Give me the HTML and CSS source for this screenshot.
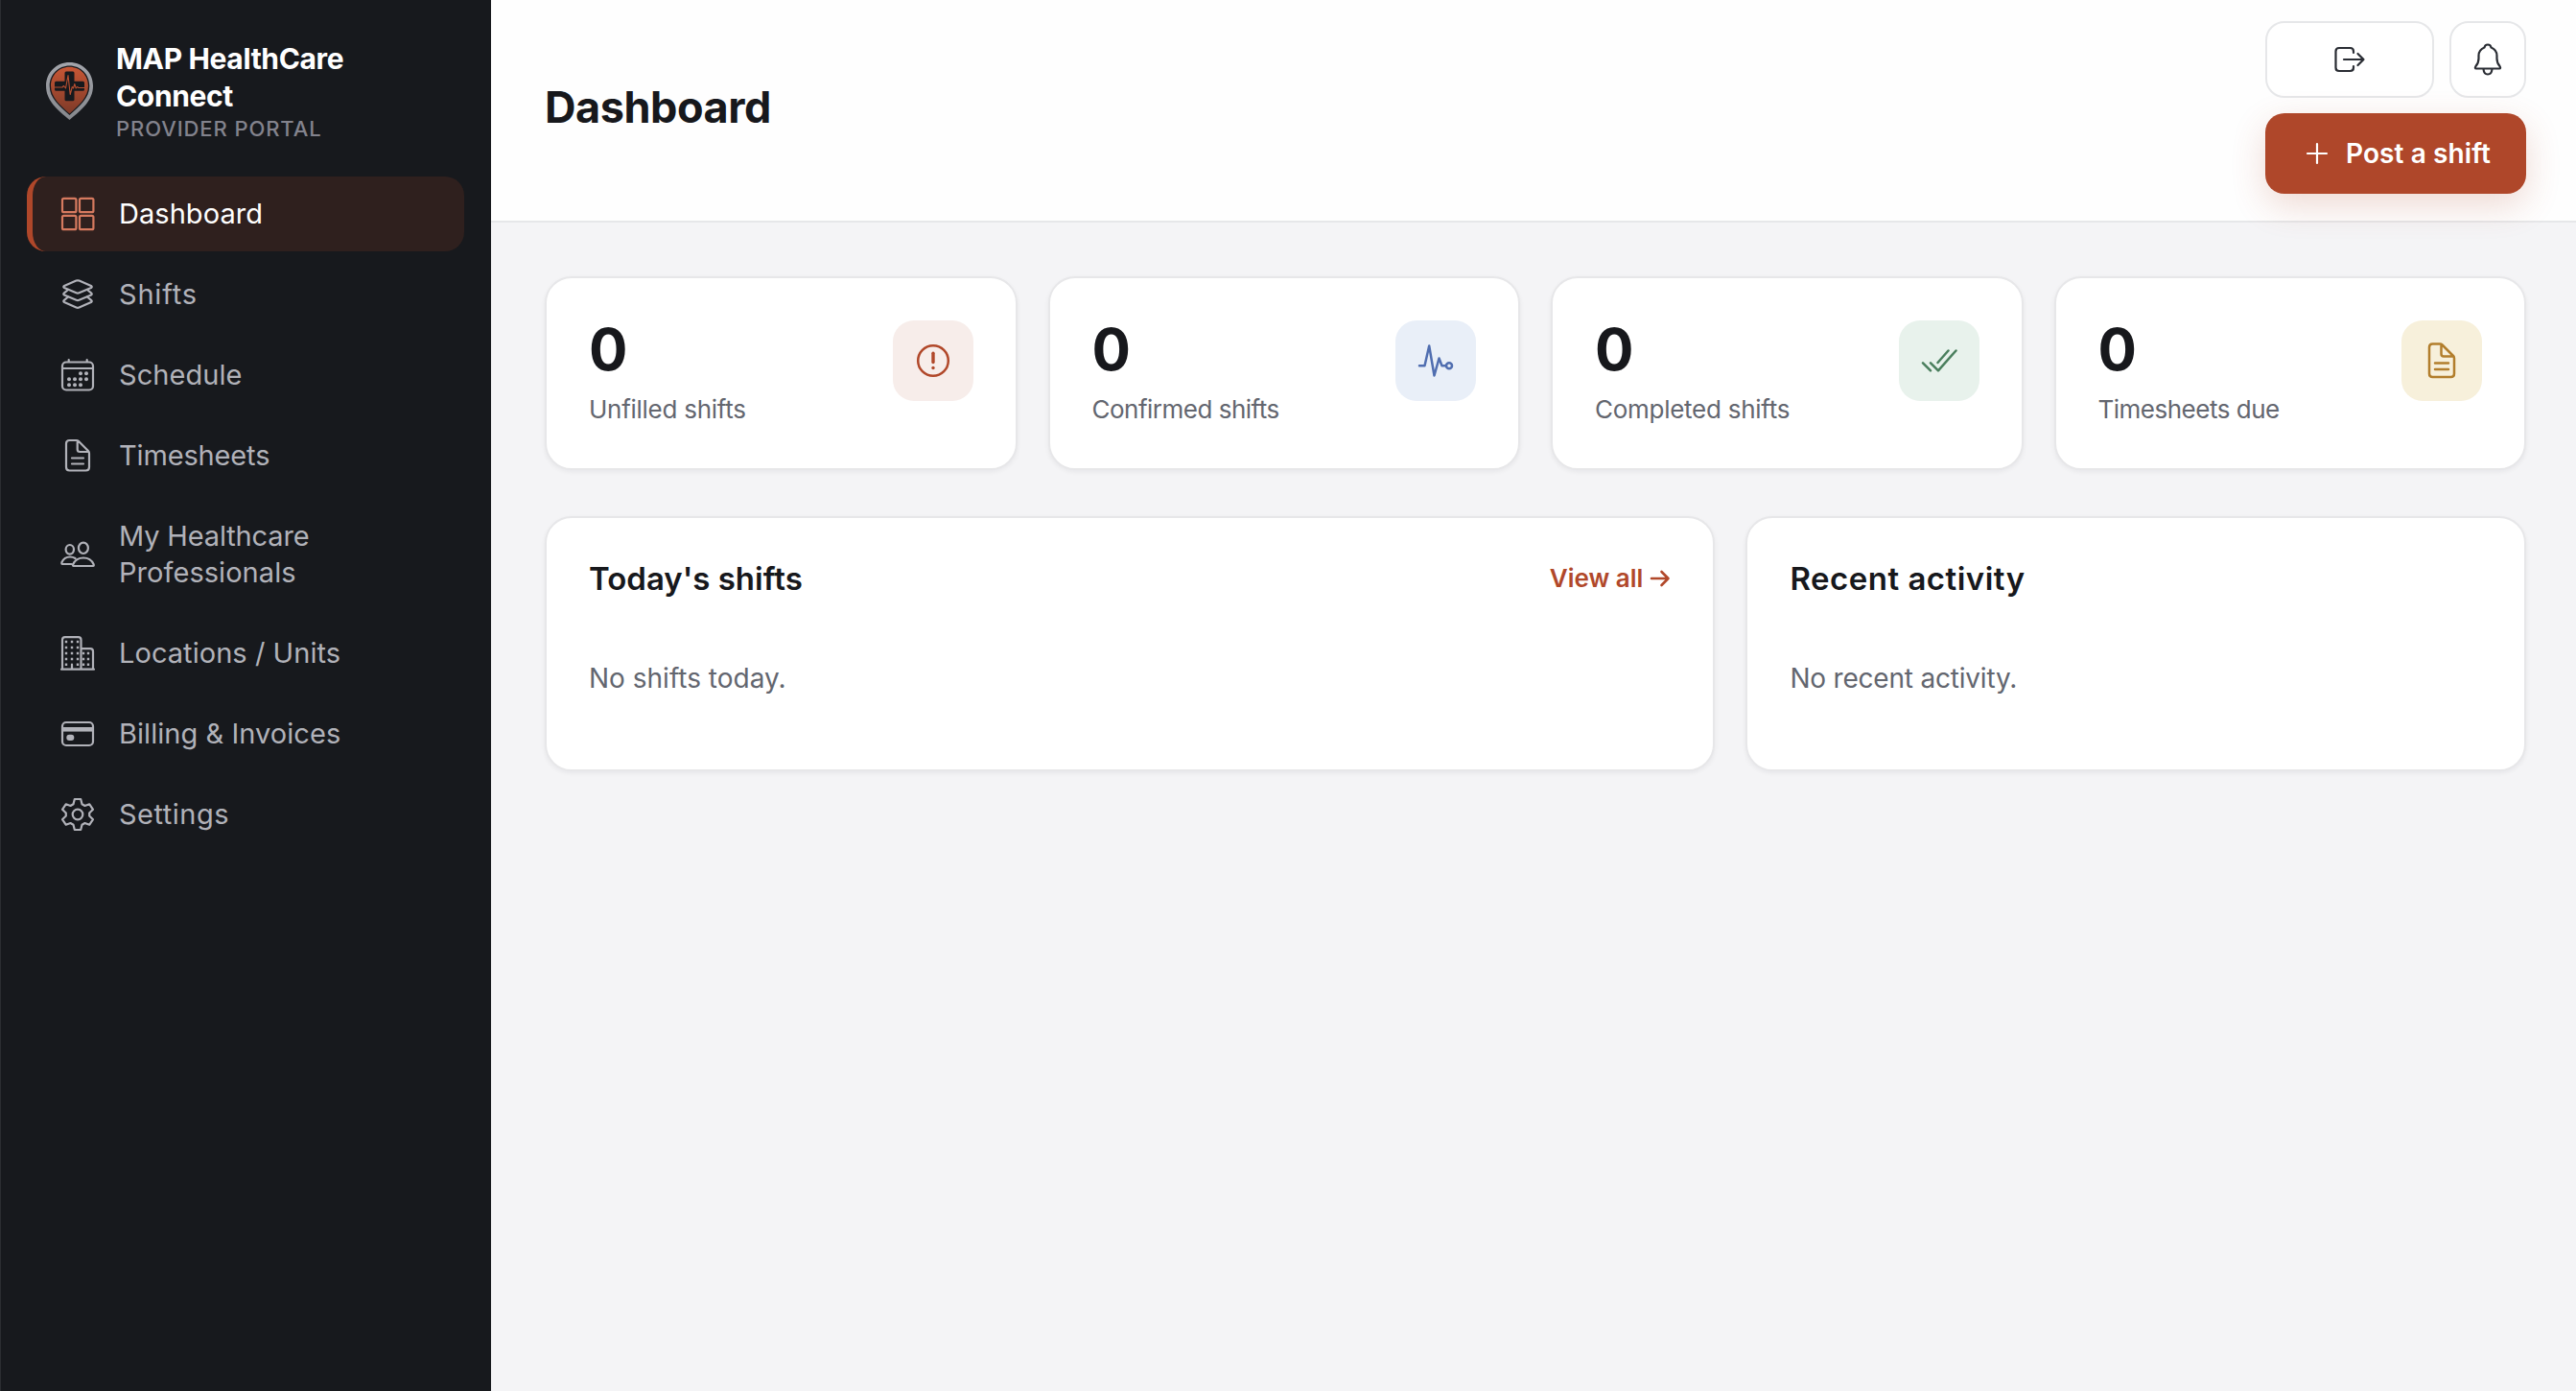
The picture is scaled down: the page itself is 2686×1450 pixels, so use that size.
FILE: index.html
```html
<!DOCTYPE html>
<html lang="en">
<head>
<meta charset="utf-8">
<title>Dashboard</title>
<link rel="stylesheet" href="styles.css">
</head>
<body>
<aside class="sidebar">
  <div class="brand">
    <svg class="brand-logo" viewBox="48 65 50 60">
      <defs>
        <linearGradient id="pin" x1="0" y1="0" x2="0" y2="1"><stop offset="0" stop-color="#c75635"/><stop offset="1" stop-color="#7d3a28"/></linearGradient>
        <linearGradient id="rim" x1="0" y1="0" x2="0" y2="1"><stop offset="0" stop-color="#a3a5ac"/><stop offset="1" stop-color="#85878c"/></linearGradient>
      </defs>
      <path fill="url(#rim)" d="M72.500 65C86 65 97 75.500 97 89.500C97 105 85 114.500 72.500 125C60 114.500 48 105 48 89.500C48 75.500 59 65 72.500 65Z"/>
      <path fill="#17191d" d="M72.500 68.500C84 68.500 93.300 77.500 93.300 89.500C93.300 102.500 83 110.500 72.500 120C62 110.500 51.700 102.500 51.700 89.500C51.700 77.500 61 68.500 72.500 68.500Z"/>
      <path fill="url(#pin)" d="M72.500 69.800C83.500 69.800 92 78.500 92 89.500C92 101.500 82.500 109.500 72.500 118.500C62.500 109.500 53 101.500 53 89.500C53 78.500 61.500 69.800 72.500 69.800Z"/>
      <path fill="#17191d" d="M69 74.500h7a1.500 1.500 0 0 1 1.500 1.500v8.800h9a1.500 1.500 0 0 1 1.500 1.500v7a1.500 1.500 0 0 1-1.500 1.500h-9v9a1.500 1.500 0 0 1-1.500 1.500h-7a1.500 1.500 0 0 1-1.500-1.500v-9h-9a1.500 1.500 0 0 1-1.500-1.500v-7a1.500 1.500 0 0 1 1.500-1.500h9V76a1.500 1.500 0 0 1 1.500-1.500Z"/>
      <path fill="none" stroke="#b84f31" stroke-width="1.100" stroke-linejoin="round" d="M57 91h8l1.500-1.500L68.500 92l2.500-13.500L73.200 98.500l2.100-8 1.200 1.500 1.300-4.500 1.400 4.500 1.300-1.500 1.500 1H88"/>
    </svg>
    <div class="brand-text">
      <div class="brand-name">MAP HealthCare<br>Connect</div>
      <div class="brand-sub">PROVIDER PORTAL</div>
    </div>
  </div>
  <nav class="nav">
    <a class="nav-item active">
      <svg viewBox="61 203 40 40"><rect x="65" y="206.800" width="14.400" height="14.400" rx="1.500"/><rect x="83" y="206.800" width="14.400" height="14.400" rx="1.500"/><rect x="65" y="224.800" width="14.400" height="14.400" rx="1.500"/><rect x="83" y="224.800" width="14.400" height="14.400" rx="1.500"/></svg>
      <span>Dashboard</span></a>
    <a class="nav-item">
      <svg viewBox="61 287 40 40"><path d="M79.500 292.600 67 298Q65.500 299 67 300L79.500 305.300Q81 306 82.500 305.300L95 300Q96.500 299 95 298L82.500 292.600Q81 292 79.500 292.600Z"/><path d="M71 302 67 305.300Q65.500 306.500 67 307.500L79.500 312.800Q81 313.400 82.500 312.800L95 307.500Q96.500 306.500 95 305.300L91 302"/><path d="M71 309.500 67 312.800Q65.500 314 67 315L79.500 320.500Q81 321.200 82.500 320.500L95 315Q96.500 314 95 312.800L91 309.500"/></svg>
      <span class="loose-2">Shifts</span></a>
    <a class="nav-item">
      <svg viewBox="61 371 40 40"><rect x="65" y="377.500" width="32" height="29" rx="4"/><path d="M65 384H97M71.700 375v2M90.700 375v2"/><g class="solid"><circle cx="84" cy="389.300" r="2"/><circle cx="90" cy="389.300" r="2"/><circle cx="72" cy="395.300" r="2"/><circle cx="78" cy="395.300" r="2"/><circle cx="84" cy="395.300" r="2"/><circle cx="90" cy="395.300" r="2"/><circle cx="72" cy="401.300" r="2"/><circle cx="78" cy="401.300" r="2"/><circle cx="84" cy="401.300" r="2"/></g></svg>
      <span>Schedule</span></a>
    <a class="nav-item">
      <svg viewBox="61 455 40 40"><path d="M72.500 459H79.500Q81 459 82 460L92 470Q93 471 93 472.500V487Q93 490.500 89.500 490.500H72.500Q69 490.500 69 487V462.500Q69 459 72.500 459ZM80.700 459.500V468.500Q80.700 471 83.200 471H92.500M75 477.500H87M75 483.500H87"/></svg>
      <span class="snug">Timesheets</span></a>
    <a class="nav-item">
      <svg viewBox="61 558 40 40"><ellipse cx="86.900" cy="571.300" rx="5" ry="5.700"/><ellipse cx="72.800" cy="572.800" rx="4.200" ry="4.800"/><path d="M76.500 590Q75.500 590 76.300 588Q79.500 581.500 87 581.500Q94.500 581.500 97.500 588Q98.300 590 97 590ZM74.500 588H65Q64 588 64.500 586Q67 580.500 73 580.500Q76 580.500 78.500 582"/></svg>
      <span><span class="snug">My Healthcare</span><br>Professionals</span></a>
    <a class="nav-item">
      <svg viewBox="61 661 40 40"><path d="M65 697.700V667Q65 664.200 67.800 664.200H81.700Q84.500 664.200 84.500 667V697.700M84.500 676.200H94.200Q97 676.200 97 679V697.700M64 697.700H98M75 692.500V697.500"/><path class="dots" d="M69 669h.01M75 669h.01M81 669h.01M69 675h.01M75 675h.01M81 675h.01M69 681h.01M75 681h.01M81 681h.01M69 687h.01M75 687h.01M81 687h.01M69 692.800h.01M81 692.800h.01M87 681h.01M92 681h.01M87 687h.01M92 687h.01M87 692.800h.01M92 692.800h.01"/></svg>
      <span>Locations / Units</span></a>
    <a class="nav-item">
      <svg viewBox="61 745 40 40"><rect x="65" y="753" width="32" height="24" rx="4"/><path class="solid" d="M65 758H97V762.600H65Z"/><rect class="solid" x="69.300" y="765.800" width="8" height="6.200" rx="3"/></svg>
      <span>Billing &amp; Invoices</span></a>
    <a class="nav-item">
      <svg viewBox="61 829 40 40"><circle cx="81" cy="849" r="5.300"/><path d="M77.800 833H84.200L85.500 838.200 88.500 840 93.300 838.300 97 843.800 93.200 847.500V850.500L97 854.200 93.300 859.700 88.500 858 85.500 859.800 84.200 865H77.800L76.500 859.800 73.500 858 68.700 859.700 65 854.200 68.800 850.500V847.500L65 843.800 68.700 838.300 73.500 840 76.500 838.200Z"/></svg>
      <span class="loose">Settings</span></a>
  </nav>
</aside>
<div class="main">
  <header class="topbar">
    <h1>Dashboard</h1>
    <div class="actions">
      <div class="action-row">
        <button class="btn logout" aria-label="Log out"><svg viewBox="2430 42 40 40"><path d="M2454 55V53.500Q2454 50 2450.500 50H2439Q2435.500 50 2435.500 53.500V70.500Q2435.500 74 2439 74H2450.500Q2454 74 2454 70.500V69M2444 62H2464.500M2458.500 56 2464.500 62 2458.500 68"/></svg></button>
        <button class="btn bell" aria-label="Notifications"><svg viewBox="2574 42 40 40"><path d="M2582 71.500H2606Q2608 71.500 2606.500 69Q2603.500 65.500 2603.500 61V58Q2603.500 52 2597.500 49.500Q2597 46.500 2594 46.500Q2591 46.500 2590.500 49.500Q2584.500 52 2584.500 58V61Q2584.500 65.500 2581.500 69Q2580 71.500 2582 71.500ZM2589.500 72Q2590 77.500 2594 77.500Q2598 77.500 2598.500 72"/></svg></button>
      </div>
      <button class="btn primary"><svg viewBox="2404 148 24 24"><path d="M2406 160H2426M2416 150V170"/></svg><span>Post a shift</span></button>
    </div>
  </header>
  <main class="content">
    <section class="stats">
      <div class="card stat"><div><div class="num">0</div><div class="label">Unfilled shifts</div></div>
        <div class="tile red"><svg viewBox="-20 -20 40 40"><circle r="15.800"/><path class="bang" d="M0-7.800V1.500"/><circle class="solid" cy="7.500" r="1.700"/></svg></div></div>
      <div class="card stat"><div><div class="num">0</div><div class="label tight">Confirmed shifts</div></div>
        <div class="tile blue"><svg viewBox="-20 -20 40 40"><path d="M-17 5.300H-11.500L-6.800-15.500-1.500 15.500 3.500-2.500 6.500 5.300H10.500"/><circle cx="14" cy="5.300" r="3"/></svg></div></div>
      <div class="card stat"><div><div class="num">0</div><div class="label">Completed shifts</div></div>
        <div class="tile green"><svg viewBox="-20 -20 40 40"><path d="M-17 2.300-9 10.300M-9 2.300-1 10.300 17.500-10.500M-1.500 2 9.500-10.500"/></svg></div></div>
      <div class="card stat"><div><div class="num">0</div><div class="label tight">Timesheets due</div></div>
        <div class="tile gold"><svg viewBox="-20 -20 40 40"><path d="M-9.500-17.500H-2Q-.5-17.500.5-16.500L12-5Q13-4 13-2.500V13.500Q13 17 9.500 17H-9.500Q-13 17-13 13.500V-14Q-13-17.500-9.500-17.500ZM-.5-17V-7Q-.5-4.500 2-4.500H12.500M-7 2.500H7M-7 9H7"/></svg></div></div>
    </section>
    <section class="panels">
      <div class="card panel"><div class="panel-head"><h2>Today's shifts</h2><a class="view-all"><span>View all</span><svg viewBox="1720 593 22 22"><path d="M1722 604H1739.500M1732.500 597 1739.500 604 1732.500 611"/></svg></a></div><p>No shifts today.</p></div>
      <div class="card panel"><div class="panel-head"><h2 class="loose">Recent activity</h2></div><p class="tight">No recent activity.</p></div>
    </section>
  </main>
</div>
</body>
</html>
```
FILE: styles.css
```css
* { box-sizing: border-box; }
body {
  margin: 0;
  height: 1450px;
  display: flex;
  background: #f4f4f6;
  color: #17181c;
  font-family: Inter, "Liberation Sans", sans-serif;
  overflow: hidden;
}
svg {
  display: block;
  flex: none;
  width: 40px;
  height: 40px;
  fill: none;
  stroke: currentColor;
  stroke-width: 2.2;
  stroke-linecap: round;
  stroke-linejoin: round;
}
.solid { fill: currentColor; stroke: none; }
.dots { stroke-width: 2.4; stroke-linecap: square; }

.sidebar {
  width: 512px;
  flex: none;
  padding: 42px 28px 0 27px;
  background: #17191d;
  border-left: 1px solid #2b2d31;
}
.brand { display: flex; align-items: center; gap: 23px; padding-left: 20px; height: 106px; }
.brand-logo { width: 50px; height: 60px; stroke: none; }
.brand-name { font-size: 30px; line-height: 39px; font-weight: 700; letter-spacing: -0.35px; color: #fff; }
.brand-sub { font-size: 22px; line-height: 28px; font-weight: 500; color: #83838d; letter-spacing: 0.9px; }

.nav { display: flex; flex-direction: column; gap: 6px; margin-top: 36px; }
.nav-item {
  display: flex;
  align-items: center;
  gap: 23px;
  padding: 20px 27px;
  border-left: 6px solid transparent;
  border-radius: 20px;
  font-size: 29px;
  line-height: 38px;
  letter-spacing: 0.05px;
  color: #b1b2b9;
}
.nav-item svg { margin-block: -1px; }
.nav-item.active { background: #2f201e; border-left-color: #af472a; color: #fff; }
.nav-item.active svg { color: #d67a5f; }
.nav-item .snug { letter-spacing: -0.15px; }
.nav-item .loose { letter-spacing: 0.5px; }
.nav-item .loose-2 { letter-spacing: 0.8px; }

.main { flex: 1; min-width: 0; }
.topbar {
  display: flex;
  justify-content: space-between;
  align-items: center;
  height: 232px;
  padding: 22px 52px 28px 56px;
  background: #fefefe;
  border-bottom: 2px solid #e6e7e9;
}
h1 { margin: 0; font-size: 45px; line-height: 54px; font-weight: 700; letter-spacing: -0.45px; }
.actions { display: flex; flex-direction: column; gap: 16px; width: 272px; }
.action-row { display: flex; gap: 16px; }
.btn {
  display: flex;
  align-items: center;
  justify-content: center;
  height: 80px;
  padding: 0;
  border: 2px solid #e6e7e9;
  border-radius: 20px;
  background: #fff;
  color: #2a2d34;
  font: inherit;
}
.logout { flex: 1; }
.bell { width: 80px; }
.primary {
  height: 84px;
  gap: 18px;
  padding-left: 5px;
  border: 0;
  background: #af472a;
  color: #fff;
  font-size: 28px;
  font-weight: 600;
  letter-spacing: 0.1px;
  box-shadow: 0 12px 36px rgba(175, 71, 42, .2);
}
.primary svg { width: 24px; height: 24px; }

.content { padding: 56px 52px 0 56px; }
.stats { display: grid; grid-template-columns: repeat(4, 1fr); gap: 32px; }
.card {
  background: #fff;
  border: 2px solid #e7e7e9;
  border-radius: 28px;
  padding: 44px;
  box-shadow: 0 2px 5px rgba(20, 22, 28, .06);
}
.stat { display: flex; justify-content: space-between; height: 202px; }
.num { font-size: 60px; line-height: 60px; font-weight: 700; }
.label { margin-top: 16px; font-size: 26px; line-height: 34px; letter-spacing: -0.27px; color: #63666f; }
.label.tight { letter-spacing: -0.5px; }
.tile { width: 84px; height: 84px; border-radius: 22px; display: grid; place-items: center; }
.tile svg { stroke-width: 2.5; }
.tile .bang { stroke-width: 3.4; }
.red { background: #f7edea; color: #b1482a; }
.blue { background: #e9eff8; color: #506eb0; }
.green { background: #e8f2ec; color: #4a7f5d; }
.gold { background: #f7f0db; color: #b27e2c; }

.panels { display: grid; grid-template-columns: 3fr 2fr; gap: 32px; margin-top: 48px; }
.panel { height: 266px; padding-top: 43px; }
.panel-head { display: flex; justify-content: space-between; align-items: center; height: 40px; }
h2 { margin: 0; font-size: 33px; line-height: 40px; font-weight: 600; }
h2.loose { letter-spacing: 0.5px; }
.view-all { display: flex; align-items: center; gap: 7px; font-size: 26px; line-height: 32px; font-weight: 600; color: #b1482a; }
.view-all svg { width: 22px; height: 22px; stroke-width: 2.6; }
p { margin: 67px 0 0; font-size: 28px; line-height: 34px; color: #63666f; }
p.tight { letter-spacing: -0.2px; }
```
